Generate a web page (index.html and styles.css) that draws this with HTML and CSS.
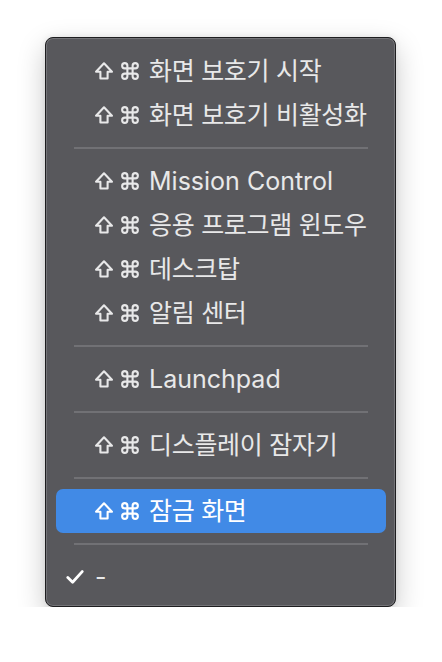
FILE: index.html
```html
<!DOCTYPE html>
<html lang="ko">
<head>
    <meta charset="UTF-8">
    <meta name="viewport" content="width=device-width, initial-scale=1.0">
    <title>단축키 메뉴</title>
    <link rel="stylesheet" href="styles.css">
</head>
<body>
    <div class="page">
        <div class="menu">
            <div class="item">
                <span class="check"></span>
                <span class="keys">
                    <svg class="key" width="18" height="18" viewBox="-0.5 -0.5 19 19"><path d="M9 0.9 L17.4 9.8 H12.8 V17 H5.2 V9.8 H0.6 Z" fill="none" stroke="currentColor" stroke-width="2.2" stroke-linejoin="round"/></svg>
                    <svg class="key" width="18" height="18" viewBox="1.7 1.7 20.6 20.6"><path d="M15 6v12a3 3 0 1 0 3-3H6a3 3 0 1 0 3 3V6a3 3 0 1 0-3 3h12a3 3 0 1 0-3-3" fill="none" stroke="currentColor" stroke-width="2.4" stroke-linecap="round" stroke-linejoin="round"/></svg>
                </span>
                <span class="label ko">화면 보호기 시작</span>
            </div>
            <div class="item">
                <span class="check"></span>
                <span class="keys">
                    <svg class="key" width="18" height="18" viewBox="-0.5 -0.5 19 19"><path d="M9 0.9 L17.4 9.8 H12.8 V17 H5.2 V9.8 H0.6 Z" fill="none" stroke="currentColor" stroke-width="2.2" stroke-linejoin="round"/></svg>
                    <svg class="key" width="18" height="18" viewBox="1.7 1.7 20.6 20.6"><path d="M15 6v12a3 3 0 1 0 3-3H6a3 3 0 1 0 3 3V6a3 3 0 1 0-3 3h12a3 3 0 1 0-3-3" fill="none" stroke="currentColor" stroke-width="2.4" stroke-linecap="round" stroke-linejoin="round"/></svg>
                </span>
                <span class="label ko">화면 보호기 비활성화</span>
            </div>

            <div class="separator"></div>

            <div class="item">
                <span class="check"></span>
                <span class="keys">
                    <svg class="key" width="18" height="18" viewBox="-0.5 -0.5 19 19"><path d="M9 0.9 L17.4 9.8 H12.8 V17 H5.2 V9.8 H0.6 Z" fill="none" stroke="currentColor" stroke-width="2.2" stroke-linejoin="round"/></svg>
                    <svg class="key" width="18" height="18" viewBox="1.7 1.7 20.6 20.6"><path d="M15 6v12a3 3 0 1 0 3-3H6a3 3 0 1 0 3 3V6a3 3 0 1 0-3 3h12a3 3 0 1 0-3-3" fill="none" stroke="currentColor" stroke-width="2.4" stroke-linecap="round" stroke-linejoin="round"/></svg>
                </span>
                <span class="label">Mission Control</span>
            </div>
            <div class="item">
                <span class="check"></span>
                <span class="keys">
                    <svg class="key" width="18" height="18" viewBox="-0.5 -0.5 19 19"><path d="M9 0.9 L17.4 9.8 H12.8 V17 H5.2 V9.8 H0.6 Z" fill="none" stroke="currentColor" stroke-width="2.2" stroke-linejoin="round"/></svg>
                    <svg class="key" width="18" height="18" viewBox="1.7 1.7 20.6 20.6"><path d="M15 6v12a3 3 0 1 0 3-3H6a3 3 0 1 0 3 3V6a3 3 0 1 0-3 3h12a3 3 0 1 0-3-3" fill="none" stroke="currentColor" stroke-width="2.4" stroke-linecap="round" stroke-linejoin="round"/></svg>
                </span>
                <span class="label ko">응용 프로그램 윈도우</span>
            </div>
            <div class="item">
                <span class="check"></span>
                <span class="keys">
                    <svg class="key" width="18" height="18" viewBox="-0.5 -0.5 19 19"><path d="M9 0.9 L17.4 9.8 H12.8 V17 H5.2 V9.8 H0.6 Z" fill="none" stroke="currentColor" stroke-width="2.2" stroke-linejoin="round"/></svg>
                    <svg class="key" width="18" height="18" viewBox="1.7 1.7 20.6 20.6"><path d="M15 6v12a3 3 0 1 0 3-3H6a3 3 0 1 0 3 3V6a3 3 0 1 0-3 3h12a3 3 0 1 0-3-3" fill="none" stroke="currentColor" stroke-width="2.4" stroke-linecap="round" stroke-linejoin="round"/></svg>
                </span>
                <span class="label ko">데스크탑</span>
            </div>
            <div class="item">
                <span class="check"></span>
                <span class="keys">
                    <svg class="key" width="18" height="18" viewBox="-0.5 -0.5 19 19"><path d="M9 0.9 L17.4 9.8 H12.8 V17 H5.2 V9.8 H0.6 Z" fill="none" stroke="currentColor" stroke-width="2.2" stroke-linejoin="round"/></svg>
                    <svg class="key" width="18" height="18" viewBox="1.7 1.7 20.6 20.6"><path d="M15 6v12a3 3 0 1 0 3-3H6a3 3 0 1 0 3 3V6a3 3 0 1 0-3 3h12a3 3 0 1 0-3-3" fill="none" stroke="currentColor" stroke-width="2.4" stroke-linecap="round" stroke-linejoin="round"/></svg>
                </span>
                <span class="label ko">알림 센터</span>
            </div>

            <div class="separator"></div>

            <div class="item">
                <span class="check"></span>
                <span class="keys">
                    <svg class="key" width="18" height="18" viewBox="-0.5 -0.5 19 19"><path d="M9 0.9 L17.4 9.8 H12.8 V17 H5.2 V9.8 H0.6 Z" fill="none" stroke="currentColor" stroke-width="2.2" stroke-linejoin="round"/></svg>
                    <svg class="key" width="18" height="18" viewBox="1.7 1.7 20.6 20.6"><path d="M15 6v12a3 3 0 1 0 3-3H6a3 3 0 1 0 3 3V6a3 3 0 1 0-3 3h12a3 3 0 1 0-3-3" fill="none" stroke="currentColor" stroke-width="2.4" stroke-linecap="round" stroke-linejoin="round"/></svg>
                </span>
                <span class="label">Launchpad</span>
            </div>

            <div class="separator"></div>

            <div class="item">
                <span class="check"></span>
                <span class="keys">
                    <svg class="key" width="18" height="18" viewBox="-0.5 -0.5 19 19"><path d="M9 0.9 L17.4 9.8 H12.8 V17 H5.2 V9.8 H0.6 Z" fill="none" stroke="currentColor" stroke-width="2.2" stroke-linejoin="round"/></svg>
                    <svg class="key" width="18" height="18" viewBox="1.7 1.7 20.6 20.6"><path d="M15 6v12a3 3 0 1 0 3-3H6a3 3 0 1 0 3 3V6a3 3 0 1 0-3 3h12a3 3 0 1 0-3-3" fill="none" stroke="currentColor" stroke-width="2.4" stroke-linecap="round" stroke-linejoin="round"/></svg>
                </span>
                <span class="label ko">디스플레이 잠자기</span>
            </div>

            <div class="separator"></div>

            <div class="item selected">
                <span class="check"></span>
                <span class="keys">
                    <svg class="key" width="18" height="18" viewBox="-0.5 -0.5 19 19"><path d="M9 0.9 L17.4 9.8 H12.8 V17 H5.2 V9.8 H0.6 Z" fill="none" stroke="currentColor" stroke-width="2.2" stroke-linejoin="round"/></svg>
                    <svg class="key" width="18" height="18" viewBox="1.7 1.7 20.6 20.6"><path d="M15 6v12a3 3 0 1 0 3-3H6a3 3 0 1 0 3 3V6a3 3 0 1 0-3 3h12a3 3 0 1 0-3-3" fill="none" stroke="currentColor" stroke-width="2.4" stroke-linecap="round" stroke-linejoin="round"/></svg>
                </span>
                <span class="label ko">잠금 화면</span>
            </div>

            <div class="separator"></div>

            <div class="item">
                <span class="check">
                    <svg class="tick" width="18" height="14" viewBox="0 0 18 14"><path d="M1.8 7.4 L6.6 12.2 L16.2 1.6" fill="none" stroke="currentColor" stroke-width="2.8" stroke-linecap="round" stroke-linejoin="round"/></svg>
                </span>
                <span class="label">-</span>
            </div>
        </div>
    </div>
</body>
</html>
```

FILE: styles.css
```css
/* General */
body {
    margin: 0;
    background: #fff;
    font-family: Inter, "Noto Sans CJK KR", sans-serif;
}

.page {
    padding: 37px 0 0 45px;
}

/* Menu panel */
.menu {
    width: 351px;
    box-sizing: border-box;
    padding: 11px 0 7px;
    background: #58585c;
    border: 1px solid #1e1e20;
    border-radius: 8px;
    box-shadow: inset 0 0 0 1px #747478, 0 10px 28px rgba(0, 0, 0, 0.22), 0 0 6px rgba(0, 0, 0, 0.08);
    color: #e8e8e9;
}

/* Rows */
.item {
    display: flex;
    align-items: center;
    height: 44px;
    margin: 0 9px 0 10px;
    padding-left: 10px;
    border-radius: 7px;
    font-size: 25px;
    white-space: nowrap;
}

.item.selected {
    background: #418ae6;
    color: #fff;
}

.check {
    display: flex;
    align-items: center;
    width: 29px;
    flex-shrink: 0;
}

.tick {
    display: block;
    color: #fff;
}

.keys {
    display: flex;
    align-items: center;
    gap: 8px;
    margin-right: 10px;
}

.key {
    display: block;
    flex-shrink: 0;
}

.label {
    line-height: 1;
}

.label.ko {
    letter-spacing: -0.3px;
}

/* Separator */
.separator {
    height: 2px;
    margin: 10px 27px 10px 28px;
    background: #717175;
}
```
